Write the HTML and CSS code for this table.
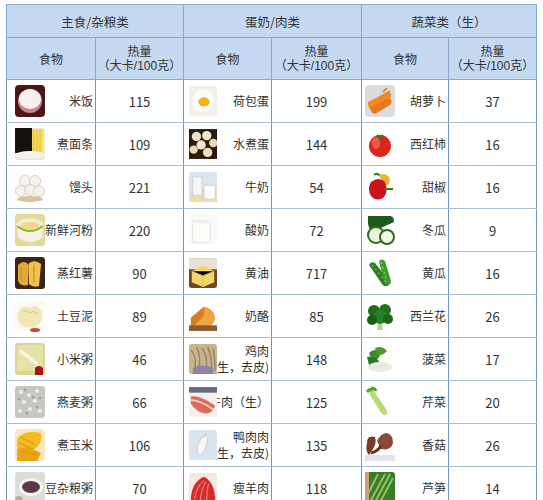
FILE: index.html
```html
<!DOCTYPE html>
<html lang="zh">
<head>
<meta charset="utf-8">
<link rel="stylesheet" href="styles.css">
</head>
<body>
<div class="wrap">
<table class="cal">
<colgroup><col class="c1"><col class="c2"><col class="c3"><col class="c4"><col class="c5"><col class="c6"></colgroup>
<thead>
<tr class="h1"><th colspan="2">主食/杂粮类</th><th colspan="2">蛋奶/肉类</th><th colspan="2">蔬菜类（生）</th></tr>
<tr class="h2"><th>食物</th><th><span class="hl">热量</span><span class="hl">（大卡/100克）</span></th><th>食物</th><th><span class="hl">热量</span><span class="hl">（大卡/100克）</span></th><th>食物</th><th><span class="hl">热量</span><span class="hl">（大卡/100克）</span></th></tr>
</thead>
<tbody>
<tr>
<td><div class="food g1"><svg class="pic" viewBox="0 0 30 32"><rect width="30" height="32" rx="4" fill="#4a1618"/><ellipse cx="15" cy="16" rx="12" ry="12" fill="#c98590"/><ellipse cx="15" cy="14" rx="11" ry="10" fill="#f6f1f0"/></svg><span class="name">米饭</span></div></td><td class="num">115</td>
<td><div class="food g2"><svg class="pic" viewBox="0 0 30 32"><rect width="30" height="32" rx="3" fill="#f3efe9"/><path d="M4 10 Q8 3 18 4 Q28 6 26 16 Q25 27 14 28 Q3 27 4 18Z" fill="#fdfcf8"/><ellipse cx="16" cy="17" rx="6" ry="5" fill="#f2b21f"/></svg><span class="name">荷包蛋</span></div></td><td class="num">199</td>
<td><div class="food g3"><svg class="pic" viewBox="0 0 30 32"><rect width="30" height="32" rx="4" fill="#dcdcde"/><path d="M3 17 L22 7 Q27 7 26 12 L8 26 Q3 25 3 17Z" fill="#f08a26"/><path d="M6 22 L25 13 Q28 17 25 20 L10 29 Q5 28 6 22Z" fill="#e9771c"/><path d="M18 7 l4 -4 M20 9 l5 -3" stroke="#e48b2a" stroke-width="2"/></svg><span class="name">胡萝卜</span></div></td><td class="num">37</td>
</tr>
<tr>
<td><div class="food g1"><svg class="pic" viewBox="0 0 30 32"><rect width="30" height="32" rx="3" fill="#e9e7dc"/><rect x="0" y="0" width="17" height="25" fill="#17110d"/><rect x="17" y="1" width="11" height="25" fill="#f1dc5c"/><path d="M19 2v23M22 2v23M25 2v23" stroke="#e2c43a"/><ellipse cx="15" cy="27" rx="15" ry="4" fill="#f4f3ee"/></svg><span class="name">煮面条</span></div></td><td class="num">109</td>
<td><div class="food g2"><svg class="pic" viewBox="0 0 30 32"><rect width="30" height="32" fill="#2a1a10"/><circle cx="8" cy="8" r="5" fill="#efe2c4"/><circle cx="19" cy="7" r="5" fill="#f2e6ca"/><circle cx="26" cy="15" r="4.5" fill="#e8d8b4"/><circle cx="13" cy="17" r="5" fill="#f4e9cf"/><circle cx="5" cy="22" r="4.5" fill="#ead9b6"/><circle cx="20" cy="25" r="5" fill="#efdfc0"/></svg><span class="name">水煮蛋</span></div></td><td class="num">144</td>
<td><div class="food g3"><svg class="pic" viewBox="0 0 30 32"><rect width="30" height="32" rx="4" fill="#fff"/><circle cx="15" cy="18" r="11" fill="#d9271c"/><ellipse cx="11" cy="15" rx="4" ry="6" fill="#ee5a48"/><path d="M12 7 l3 3 l3 -3" stroke="#3d7a1c" stroke-width="2" fill="none"/></svg><span class="name">西红柿</span></div></td><td class="num">16</td>
</tr>
<tr>
<td><div class="food g1"><svg class="pic" viewBox="0 0 30 32"><rect width="30" height="32" fill="#fff"/><g fill="#f6f3ee" stroke="#cfc6b8" stroke-width=".8"><circle cx="10" cy="10" r="5.5"/><circle cx="20" cy="10" r="5.5"/><circle cx="6" cy="20" r="5.5"/><circle cx="15" cy="19" r="5.5"/><circle cx="24" cy="20" r="5.5"/></g><ellipse cx="15" cy="28" rx="13" ry="3" fill="#d8c4a4"/></svg><span class="name">馒头</span></div></td><td class="num">221</td>
<td><div class="food g2"><svg class="pic" viewBox="0 0 30 32"><rect width="30" height="32" rx="3" fill="#d9e6f2"/><rect x="2" y="18" width="28" height="14" fill="#f0dca8"/><rect x="4" y="5" width="10" height="20" fill="#f5f6f7" stroke="#c9d2dc"/><path d="M16 14 h12 v14 q-6 3 -12 0z" fill="#fcfcfc" stroke="#c9d2dc"/></svg><span class="name">牛奶</span></div></td><td class="num">54</td>
<td><div class="food g3"><svg class="pic" viewBox="0 0 30 32"><rect width="30" height="32" fill="#fff"/><path d="M15 5 q-3 -4 -6 -1" stroke="#3e7a1a" stroke-width="2" fill="none"/><path d="M14 4 q6 -3 10 2 q3 7 -4 9z" fill="#f3b21a"/><path d="M6 11 q8 -6 14 0 q4 10 -2 16 q-7 4 -12 -2 q-4 -7 0 -14z" fill="#c8141a"/><path d="M19 18 h9" stroke="#3e7a1a" stroke-width="2"/></svg><span class="name">甜椒</span></div></td><td class="num">16</td>
</tr>
<tr>
<td><div class="food g1"><svg class="pic" viewBox="0 0 30 32"><rect width="30" height="32" rx="3" fill="#e4d89a"/><ellipse cx="15" cy="12" rx="14" ry="8" fill="#f2ead0"/><path d="M2 12 Q15 24 28 12 L27 24 Q15 32 3 24Z" fill="#f6f1e2"/><path d="M2 12 Q15 22 28 12" stroke="#8ab04a" stroke-width="2" fill="none"/><ellipse cx="15" cy="12" rx="9" ry="4" fill="#f0d880"/></svg><span class="name">新鲜河粉</span></div></td><td class="num">220</td>
<td><div class="food g2"><svg class="pic" viewBox="0 0 30 32"><rect width="30" height="32" rx="3" fill="#fafafa"/><path d="M4 6 h16 l3 3 v20 h-19z" fill="#fdfdfc" stroke="#e2e2de"/><ellipse cx="13" cy="7" rx="9" ry="2" fill="#f0efe9"/></svg><span class="name">酸奶</span></div></td><td class="num">72</td>
<td><div class="food g3"><svg class="pic" viewBox="0 0 30 32"><rect width="30" height="32" fill="#fff"/><path d="M3 2 h22 q4 0 4 6 l-22 10 q-5 -4 -4 -16z" fill="#1f5a1c"/><circle cx="11" cy="21" r="8" fill="#eef3e0" stroke="#2d6a24" stroke-width="2"/><circle cx="22" cy="23" r="7" fill="#f4f6e8" stroke="#2d6a24" stroke-width="2"/></svg><span class="name">冬瓜</span></div></td><td class="num">9</td>
</tr>
<tr>
<td><div class="food g1"><svg class="pic" viewBox="0 0 30 32"><rect width="30" height="32" rx="3" fill="#3a2414"/><path d="M3 8 q6 -6 11 0 l-1 20 q-7 2 -10 -4z" fill="#e6a83a"/><path d="M14 6 q6 -4 12 1 l-2 22 q-6 2 -10 -2z" fill="#f0c24a"/><path d="M6 10 v14M19 8 v18" stroke="#c9862a"/></svg><span class="name">蒸红薯</span></div></td><td class="num">90</td>
<td><div class="food g2"><svg class="pic" viewBox="0 0 30 32"><rect width="30" height="32" rx="3" fill="#6b4a2c"/><rect x="0" y="0" width="30" height="12" fill="#e8e2d6"/><path d="M3 14 l12 -6 l12 6 v12 l-12 5 l-12 -5z" fill="#f3d76a"/><path d="M3 14 l12 5 l12 -5 M15 19 v12" stroke="#d9b944"/></svg><span class="name">黄油</span></div></td><td class="num">717</td>
<td><div class="food g3"><svg class="pic" viewBox="0 0 30 32"><rect width="30" height="32" fill="#fff"/><path d="M4 8 q2 -4 6 -2 l14 18 q2 4 -2 5 q-3 1 -5 -2z" fill="#2f7d22"/><path d="M14 4 q3 -3 6 0 l6 20 q0 4 -4 3 q-3 0 -3 -3z" fill="#3f9a2c"/><path d="M7 8 l14 17 M16 5 l6 19" stroke="#a6d77a" stroke-dasharray="2 3"/></svg><span class="name">黄瓜</span></div></td><td class="num">16</td>
</tr>
<tr>
<td><div class="food g1"><svg class="pic" viewBox="0 0 30 32"><rect width="30" height="32" fill="#fbfaf4"/><path d="M3 12 q5 -9 12 -4 q8 -5 12 4 q2 10 -6 14 q-9 4 -16 -2 q-4 -5 -2 -12z" fill="#f1e7b8"/><path d="M8 12 q4 -3 7 1 q4 -3 8 1" stroke="#d8c480" fill="none"/><ellipse cx="20" cy="30" rx="5" ry="2" fill="#c84a3a"/></svg><span class="name">土豆泥</span></div></td><td class="num">89</td>
<td><div class="food g2"><svg class="pic" viewBox="0 0 30 32"><rect width="30" height="32" fill="#fff"/><path d="M2 18 l14 -12 q12 2 12 14 l-6 10 h-20z" fill="#f0a640"/><path d="M2 18 l14 -12 v10 l-14 14z" fill="#d67e22"/><rect x="0" y="26" width="30" height="6" fill="#8c5c34"/></svg><span class="name">奶酪</span></div></td><td class="num">85</td>
<td><div class="food g3"><svg class="pic" viewBox="0 0 30 32"><rect width="30" height="32" fill="#fff"/><circle cx="9" cy="11" r="6" fill="#1e6a18"/><circle cx="20" cy="10" r="6" fill="#22731c"/><circle cx="15" cy="17" r="7" fill="#2b8024"/><circle cx="7" cy="20" r="5" fill="#1d5e17"/><circle cx="23" cy="19" r="5" fill="#1f6619"/><path d="M13 24 h4 l1 6 h-6z" fill="#b6d68a"/></svg><span class="name">西兰花</span></div></td><td class="num">26</td>
</tr>
<tr>
<td><div class="food g1"><svg class="pic" viewBox="0 0 30 32"><rect width="30" height="32" rx="3" fill="#d8d49a"/><path d="M2 2 h26 v26 h-26z" fill="#e6e1a6"/><path d="M6 6 l18 14 l-2 3 l-18 -14z" fill="#f8f5e6"/><path d="M20 25 q4 -4 8 0 v7 h-8z" fill="#a0141a"/></svg><span class="name">小米粥</span></div></td><td class="num">46</td>
<td><div class="food g2"><svg class="pic" viewBox="0 0 30 32"><rect width="30" height="32" rx="3" fill="#c9b28e"/><path d="M2 6 q8 10 3 24M8 3 q6 12 2 26M14 4 q7 10 4 24M20 3 q5 12 4 26M26 5 q2 12 2 24" stroke="#9a8266" stroke-width="1.5" fill="none"/><path d="M4 26 q10 -6 22 0 v6 h-22z" fill="#8d85a4"/></svg><span class="name">鸡肉<br>(生，去皮)</span></div></td><td class="num">148</td>
<td><div class="food g3"><svg class="pic" viewBox="0 0 30 32"><rect width="30" height="32" fill="#fff"/><path d="M4 10 q6 -6 12 0 q-2 6 -8 10z" fill="#3a8a2a"/><path d="M10 5 q7 -3 12 3 q-4 5 -10 4z" fill="#4c9a34"/><path d="M2 14 q6 -2 12 4 q-3 6 -10 4z" fill="#2e7822"/><ellipse cx="15" cy="24" rx="12" ry="5" fill="#eaeae2"/></svg><span class="name">菠菜</span></div></td><td class="num">17</td>
</tr>
<tr>
<td><div class="food g1"><svg class="pic" viewBox="0 0 30 32"><rect width="30" height="32" rx="3" fill="#c8c6c2"/><g fill="#eeeeea"><circle cx="6" cy="6" r="2"/><circle cx="14" cy="9" r="2"/><circle cx="22" cy="5" r="2"/><circle cx="9" cy="16" r="2"/><circle cx="20" cy="15" r="2"/><circle cx="5" cy="25" r="2"/><circle cx="15" cy="23" r="2"/><circle cx="25" cy="25" r="2"/></g><g fill="#9e9c96"><circle cx="10" cy="4" r="1.2"/><circle cx="18" cy="11" r="1.2"/><circle cx="4" cy="13" r="1.2"/><circle cx="25" cy="12" r="1.2"/><circle cx="12" cy="27" r="1.2"/><circle cx="22" cy="21" r="1.2"/></g></svg><span class="name">燕麦粥</span></div></td><td class="num">66</td>
<td><div class="food g2"><svg class="pic" viewBox="0 0 30 32"><rect width="30" height="32" rx="3" fill="#f5f0ec"/><path d="M2 10 q10 -2 26 10 q-4 10 -12 8 q-8 -1 -14 -10z" fill="#e06a5c"/><path d="M2 14 q10 0 24 10" stroke="#f8d0c8" stroke-width="2" fill="none"/><rect x="0" y="0" width="30" height="6" fill="#6a6a80"/></svg><span class="name">牛肉（生）</span></div></td><td class="num">125</td>
<td><div class="food g3"><svg class="pic" viewBox="0 0 30 32"><rect width="30" height="32" fill="#fff"/><path d="M4 3 l5 2 l12 18 q3 5 -1 6 q-3 0 -5 -4 l-10 -16z" fill="#b6dc7a"/><path d="M2 6 q3 -4 6 -2 M6 2 q4 0 5 3" stroke="#5aa030" stroke-width="3" fill="none"/></svg><span class="name">芹菜</span></div></td><td class="num">20</td>
</tr>
<tr>
<td><div class="food g1"><svg class="pic" viewBox="0 0 30 32"><rect width="30" height="32" rx="4" fill="#f4e8c4"/><path d="M2 10 q8 -10 24 -6 q2 10 -6 16 q-12 6 -18 -2z" fill="#f2bb20"/><path d="M2 20 q10 -4 24 4 l-4 8 h-20z" fill="#e9a414"/><path d="M6 8 l14 8 M4 14 l14 6 M6 22 l16 4" stroke="#d7901a"/></svg><span class="name">煮玉米</span></div></td><td class="num">106</td>
<td><div class="food g2"><svg class="pic" viewBox="0 0 30 32"><rect width="30" height="32" rx="3" fill="#d9e4ee"/><path d="M10 26 q-4 -8 4 -18 q4 -3 6 0 q0 10 -6 18 q-2 3 -4 0z" fill="#f7f7f5" stroke="#c5ced8"/><path d="M16 6 l3 -2" stroke="#c5ced8"/></svg><span class="name">鸭肉肉<br>(生，去皮)</span></div></td><td class="num">135</td>
<td><div class="food g3"><svg class="pic" viewBox="0 0 30 32"><rect width="30" height="32" fill="#fff"/><path d="M2 14 q0 -8 8 -6 q2 6 -2 12 l-4 6 q-4 -4 -2 -12z" fill="#7a3a2a"/><path d="M12 12 q4 -8 10 -8 q6 2 6 10 q-2 8 -12 6z" fill="#8b4a36"/><path d="M16 16 q-2 6 -10 8" stroke="#6a3424" stroke-width="3" fill="none"/><rect x="0" y="26" width="30" height="6" fill="#e8e0ee"/></svg><span class="name">香菇</span></div></td><td class="num">26</td>
</tr>
<tr>
<td><div class="food g1"><svg class="pic" viewBox="0 0 30 32"><rect width="30" height="32" rx="3" fill="#dcdcd8"/><ellipse cx="16" cy="15" rx="12" ry="9" fill="#f5f5f2"/><ellipse cx="16" cy="15" rx="9" ry="6" fill="#5e3a48"/><ellipse cx="4" cy="28" rx="4" ry="4" fill="#b5b09c"/></svg><span class="name">红豆杂粮粥</span></div></td><td class="num">70</td>
<td><div class="food g2"><svg class="pic" viewBox="0 0 30 32"><rect width="30" height="32" rx="3" fill="#f4e8e0"/><path d="M2 30 q0 -20 14 -26 q12 6 12 26z" fill="#d42c2c"/><path d="M6 28 q2 -14 10 -20 M12 29 q1 -12 6 -20 M19 29 q0 -12 2 -18" stroke="#f09a90" fill="none"/></svg><span class="name">瘦羊肉</span></div></td><td class="num">118</td>
<td><div class="food g3"><svg class="pic" viewBox="0 0 30 32"><rect width="30" height="32" rx="3" fill="#3e7a2c"/><path d="M4 32 l16 -30 M9 32 l16 -30 M14 32 l14 -26 M1 26 l12 -24" stroke="#8cc464" stroke-width="2"/><rect x="0" y="0" width="4" height="32" fill="#c9a07a"/></svg><span class="name">芦笋</span></div></td><td class="num">14</td>
</tr>
</tbody>
</table>
</div>
</body>
</html>
```
FILE: styles.css
```css
html, body {
  margin: 0;
  background: #ffffff;
}
body {
  font-family: "Noto Sans CJK SC", "Microsoft YaHei", "Noto Sans", sans-serif;
  color: #333333;
  overflow: hidden;
}
.wrap {
  padding: 4px 0 0 6px;
}
.cal {
  border-collapse: collapse;
  table-layout: fixed;
  width: 530px;
}
.c1 { width: 89px; }
.c2 { width: 88px; }
.c3 { width: 88px; }
.c4 { width: 90px; }
.c5 { width: 87px; }
.c6 { width: 88px; }
.cal th {
  background: #c5d9f1;
  font-weight: normal;
  font-size: 12px;
  color: #333;
  border: 1px solid #8aa8cc;
  padding: 0;
}
.h1 th {
  height: 32px;
  font-size: 12.5px;
}
.h2 th {
  height: 41px;
}
.hl {
  display: block;
  font-family: "Liberation Sans", "Noto Sans CJK SC", sans-serif;
  line-height: 14px;
}
.cal td {
  border-top: 1px solid #a9bcd2;
  border-bottom: 1px solid #a9bcd2;
  border-left: 1px solid #6f95c2;
  border-right: 1px solid #6f95c2;
  height: 42px;
  padding: 0;
}
.food {
  display: grid;
  align-items: center;
  height: 42px;
}
.food > * {
  grid-area: 1 / 1;
}
.pic {
  width: 30px;
  height: 32px;
  justify-self: start;
  z-index: 1;
}
.g1 .pic { margin-left: 8px; }
.g2 .pic { margin-left: 5px; width: 28px; }
.g3 .pic { margin-left: 3px; }
.name {
  justify-self: end;
  text-align: right;
  white-space: nowrap;
  padding-right: 2px;
  font-size: 12px;
  line-height: 16px;
}
.num {
  text-align: center;
  font-size: 13px;
}
```
